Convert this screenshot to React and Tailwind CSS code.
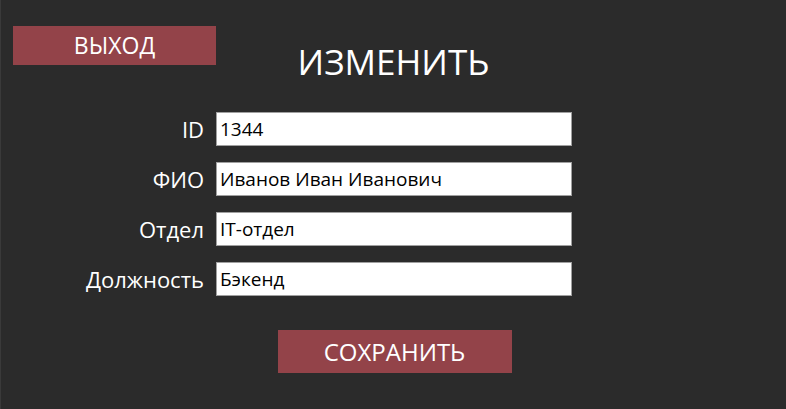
import React from "react";

const fields = [
  { label: "ID", value: "1344" },
  { label: "ФИО", value: "Иванов Иван Иванович" },
  { label: "Отдел", value: "IT-отдел" },
  { label: "Должность", value: "Бэкенд" },
];

const App = () => {
  return (
    <div
      className="w-[786px] h-[409px] bg-[#2b2b2b] text-white flex flex-col border-l border-[#3a3a3a]"
      style={{ fontFamily: '"Open Sans", "Noto Sans", sans-serif' }}
    >
      {/* Top bar */}
      <div className="grid grid-cols-[1fr_auto_1fr] items-start">
        <div>
          <button className="ml-[12px] mt-[26px] w-[203px] h-[39px] bg-[#934349] text-[23px] leading-none">
            ВЫХОД
          </button>
        </div>
        <h1 className="mt-[44px] text-[35px] leading-none">ИЗМЕНИТЬ</h1>
        <div />
      </div>

      {/* Form */}
      <div className="mt-[33px] flex flex-col gap-[16px]">
        {fields.map((f) => (
          <div key={f.label} className="flex items-center">
            <label className="w-[203px] text-right text-[22px] leading-none">{f.label}</label>
            <input
              readOnly
              value={f.value}
              className="ml-[12px] w-[356px] h-[34px] bg-white border border-[#a0a0a0] px-[3px] text-[19px] text-black outline-none"
            />
          </div>
        ))}
      </div>

      <div className="mt-[34px] flex justify-center">
        <button className="ml-[2px] w-[234px] h-[43px] bg-[#934349] text-[24px] leading-none">
          СОХРАНИТЬ
        </button>
      </div>
    </div>
  );
};

export default App;
